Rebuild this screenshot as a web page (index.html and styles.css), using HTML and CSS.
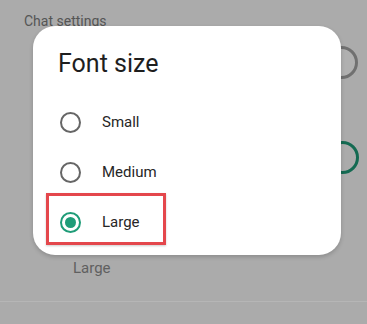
FILE: index.html
```html
<!DOCTYPE html>
<html>
<head>
<meta charset="utf-8">
<link rel="stylesheet" href="styles.css">
</head>
<body>
<div class="page">
  <div class="header">Chat settings</div>
  <div class="row row1"><span class="toggle gray"></span></div>
  <div class="row row2"><span class="toggle green"></span></div>
  <div class="sub">Large</div>
  <div class="divider"></div>

  <div class="dialog">
    <div class="title">Font size</div>
    <div class="options">
      <div class="opt"><span class="radio"></span><span class="label">Small</span></div>
      <div class="opt"><span class="radio"></span><span class="label">Medium</span></div>
      <div class="opt"><span class="radio on"></span><span class="label">Large</span></div>
    </div>
    <div class="highlight"></div>
  </div>
</div>
</body>
</html>
```
FILE: styles.css
```css
html, body {
  margin: 0;
  padding: 0;
}
body {
  width: 367px;
  height: 324px;
  overflow: hidden;
  background: #ababab;
  font-family: Roboto, "Liberation Sans", sans-serif;
}
.page {
  position: relative;
  width: 367px;
  height: 324px;
}
.header {
  padding: 13px 0 0 24px;
  font-size: 14px;
  line-height: 16px;
  color: #555555;
}
.row {
  display: flex;
  justify-content: flex-end;
}
.row1 {
  margin-top: 17px;
  padding-right: 9px;
}
.row2 {
  margin-top: 62px;
  padding-right: 8px;
}
.toggle {
  display: block;
  width: 27px;
  height: 27px;
  border-radius: 50%;
  border: 3px solid #6e6e6e;
}
.toggle.gray {
  border-color: #707070;
  background: #b0b0b0;
}
.toggle.green {
  border-color: #146a52;
}
.sub {
  margin-top: 85px;
  padding-left: 73px;
  font-size: 15px;
  line-height: 18px;
  color: #606060;
}
.divider {
  margin-top: 24px;
  height: 1px;
  background: #b6b6b6;
}
.dialog {
  position: absolute;
  left: 33px;
  top: 26px;
  width: 308px;
  height: 229px;
  box-sizing: border-box;
  background: #ffffff;
  border-radius: 22px;
  box-shadow: 0 2px 4px rgba(0,0,0,0.18);
  padding: 23px 0 0 25px;
}
.title {
  font-size: 25px;
  line-height: 29px;
  color: #1e1e1e;
}
.options {
  margin-top: 19px;
  display: flex;
  flex-direction: column;
}
.opt {
  height: 50px;
  display: flex;
  align-items: center;
}
.radio {
  box-sizing: border-box;
  width: 21px;
  height: 21px;
  border-radius: 50%;
  border: 2px solid #666666;
  margin-left: 2px;
  display: flex;
  align-items: center;
  justify-content: center;
}
.radio.on {
  border-color: #1f9c78;
}
.radio.on::after {
  content: "";
  width: 11px;
  height: 11px;
  border-radius: 50%;
  background: #1f9c78;
}
.label {
  margin-left: 21px;
  font-size: 15px;
  color: #262626;
}
.highlight {
  position: absolute;
  left: 13px;
  top: 167px;
  width: 120px;
  height: 52px;
  box-sizing: border-box;
  border: 3px solid #e4474c;
  box-shadow: 0 1px 2px rgba(0,0,0,0.2);
}
```
